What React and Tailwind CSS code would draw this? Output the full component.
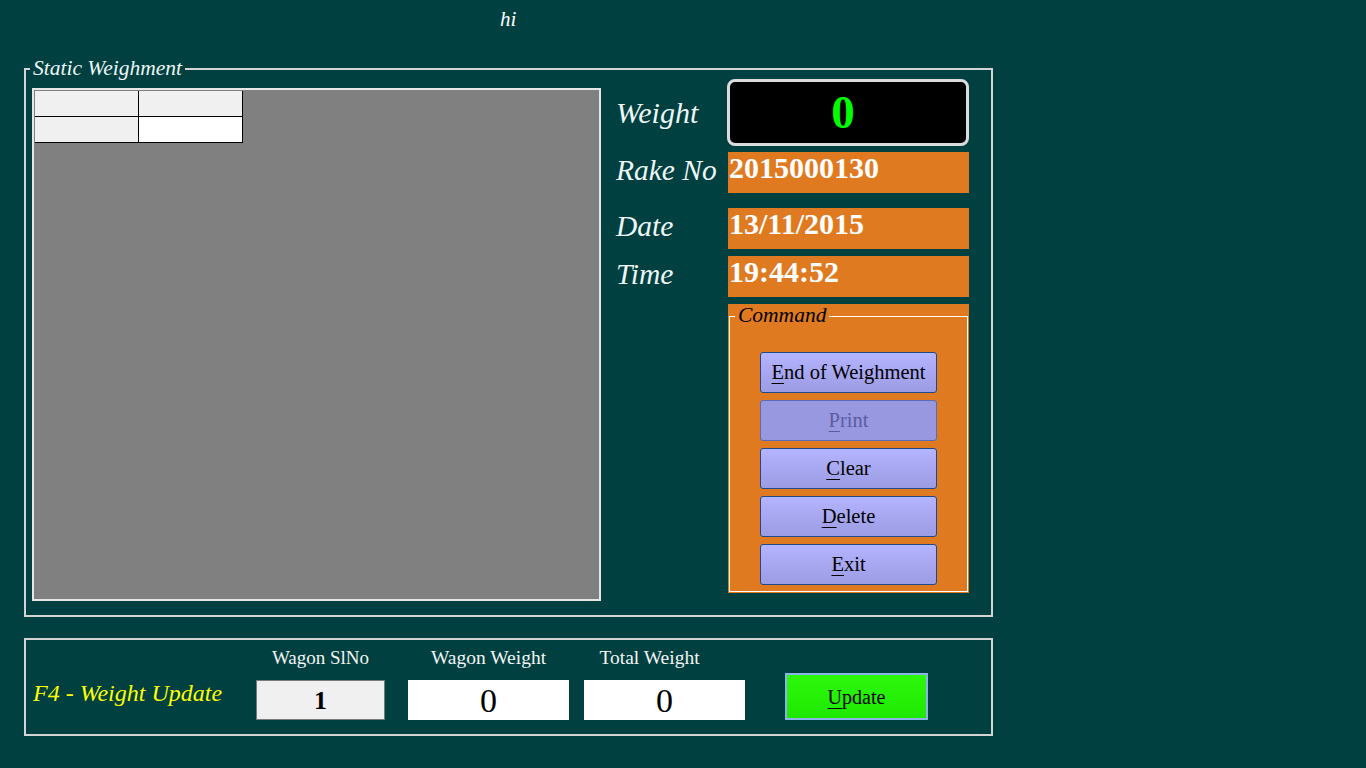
import React from 'react';

const COMMANDS = [
  { key: 'end', first: 'E', rest: 'nd of Weighment' },
  { key: 'print', first: 'P', rest: 'rint', disabled: true },
  { key: 'clear', first: 'C', rest: 'lear' },
  { key: 'delete', first: 'D', rest: 'elete' },
  { key: 'exit', first: 'E', rest: 'xit' },
];

function CmdButton({ first, rest, disabled }) {
  return (
    <button
      className={`w-[177px] h-[41px] rounded-[3px] border text-[20.5px] leading-none ${
        disabled
          ? 'bg-[#9898e0] border-[#5a6ab8] text-[#5c5ca0]'
          : 'bg-gradient-to-b from-[#b4b4ff] to-[#9c9ce4] border-[#1c4a8c] text-black'
      }`}
    >
      <span className="underline underline-offset-[4px] decoration-1">{first}</span>
      {rest}
    </button>
  );
}

function InfoRow({ label, value, className }) {
  return (
    <div className={`flex items-start ${className}`}>
      <div className="w-[112px] h-[41px] flex items-center text-[29.5px] italic text-[#eef6f6] -mt-[2px] whitespace-nowrap">{label}</div>
      <div className="w-[241px] h-[41px] bg-[#e07a20] pl-[1px] text-[30px] leading-[32px] font-bold text-white">{value}</div>
    </div>
  );
}

export default function App() {
  return (
    <div className="w-[1366px] h-[768px] bg-[#004040] overflow-hidden" style={{ fontFamily: '"Liberation Serif", "Times New Roman", serif' }}>
      <div className="h-[68px] pt-[7px] pl-[500px] text-[21px] leading-[24px] italic text-white">hi</div>

      {/* Static Weighment group */}
      <div className="relative ml-[24px] w-[969px] h-[549px] border-2 border-[#d4d4d4]">
        <span className="absolute left-[4px] -top-[14px] px-[3px] bg-[#004040] text-[21.5px] leading-[24px] italic text-[#eef6f6]">
          Static Weighment
        </span>

        <div className="flex pt-[9px] pl-[6px]">
          {/* grid panel */}
          <div className="mt-[9px] w-[569px] h-[513px] border-2 border-[#e6e6e6] bg-[#808080]">
            <div className="grid grid-cols-[104px_104px] w-[208px] mt-[1px] ml-[1px]">
              <div className="h-[26px] bg-[#f0f0f0] border-r border-b border-black"></div>
              <div className="h-[26px] bg-[#f0f0f0] border-r border-b border-black"></div>
              <div className="h-[26px] bg-[#f0f0f0] border-r border-b border-black"></div>
              <div className="h-[26px] bg-white border-r border-b border-black"></div>
            </div>
          </div>

          {/* right side */}
          <div className="ml-[15px] flex flex-col">
            <div className="flex items-center">
              <div className="w-[111px] text-[30px] italic text-[#eef6f6]">Weight</div>
              <div className="w-[242px] h-[67px] rounded-[8px] border-[3px] border-[#dcdcdc] bg-black flex items-center justify-center pr-[10px]">
                <span className="text-[47px] leading-none font-bold text-[#00ff00]">0</span>
              </div>
            </div>

            <InfoRow label="Rake No" value="2015000130" className="mt-[6px]" />
            <InfoRow label="Date" value="13/11/2015" className="mt-[15px]" />
            <InfoRow label="Time" value="19:44:52" className="mt-[7px]" />

            <div className="flex mt-[7px]">
              <div className="w-[112px]"></div>
              <div className="w-[241px] h-[289px] bg-[#e07a20] pt-[12px] px-[1px] pb-[1px]">
                <div className="relative h-full border border-white">
                  <span className="absolute left-[5px] -top-[12px] px-[3px] bg-[#e07a20] text-[21.5px] leading-[21px] italic text-black">
                    Command
                  </span>
                  <div className="flex flex-col gap-[7px] pt-[35px] pl-[30px]">
                    {COMMANDS.map((c) => (
                      <CmdButton key={c.key} first={c.first} rest={c.rest} disabled={c.disabled} />
                    ))}
                  </div>
                </div>
              </div>
            </div>
          </div>
        </div>
      </div>

      {/* Weight update group */}
      <div className="mt-[21px] ml-[24px] w-[969px] h-[98px] border-2 border-[#d4d4d4] flex items-start">
        <div className="w-[230px] h-full flex items-center pl-[7px] pt-[11px] text-[24px] italic text-[#ffff00] whitespace-nowrap">
          F4 - Weight Update
        </div>

        <div className="w-[129px] pt-[8px] flex flex-col items-center">
          <div className="text-[19px] leading-[20px] text-[#f4f4f4] whitespace-nowrap">Wagon SlNo</div>
          <div className="mt-[12px] w-[129px] h-[40px] bg-[#f0f0f0] border border-[#7a7a7a] flex items-center justify-center text-[26px] font-bold text-black">
            1
          </div>
        </div>

        <div className="ml-[23px] w-[161px] pt-[8px] flex flex-col items-center">
          <div className="text-[19.5px] leading-[20px] text-[#f4f4f4] whitespace-nowrap">Wagon Weight</div>
          <div className="mt-[12px] w-[161px] h-[40px] bg-white flex items-center justify-center text-[34px] text-black">0</div>
        </div>

        <div className="ml-[15px] w-[161px] pt-[8px] flex flex-col items-center">
          <div className="mr-[30px] text-[19.5px] leading-[20px] text-[#f4f4f4] whitespace-nowrap">Total Weight</div>
          <div className="mt-[12px] w-[161px] h-[40px] bg-white flex items-center justify-center text-[34px] text-black">0</div>
        </div>

        <button className="ml-[40px] mt-[33px] w-[143px] h-[47px] border-2 border-[#8ab4e8] bg-gradient-to-b from-[#2cf80c] to-[#1ee800] text-[20px] text-black">
          <span className="underline underline-offset-[4px] decoration-1">U</span>pdate
        </button>
      </div>
    </div>
  );
}
